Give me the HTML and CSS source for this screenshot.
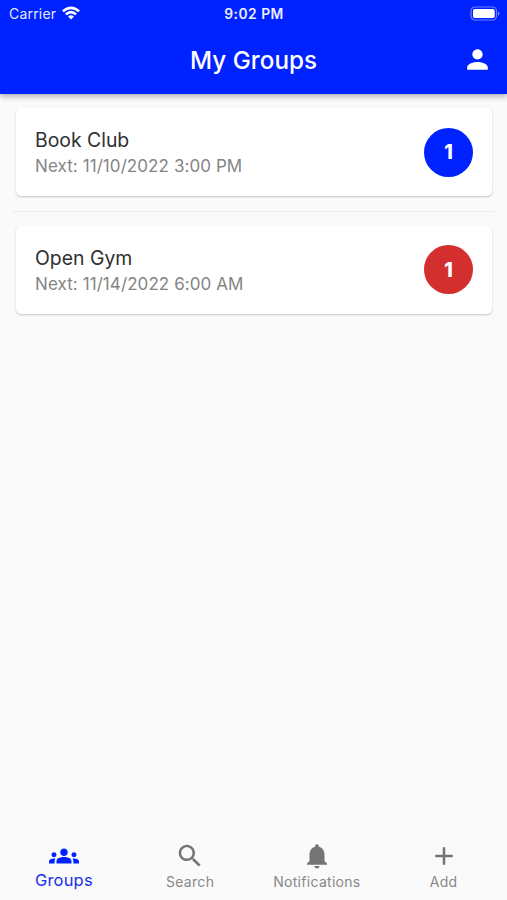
FILE: index.html
```html
<!DOCTYPE html>
<html lang="en">
<head>
<meta charset="utf-8">
<title>My Groups</title>
<link rel="stylesheet" href="styles.css">
</head>
<body>
<div class="app">
  <header class="header">
    <div class="status">
      <div class="carrier"><span>Carrier</span>
        <svg class="wifi" viewBox="0 0 18 14"><path d="M0 4.4Q9-3.6 18 4.4L16.2 6.2Q9 .2 1.8 6.2ZM3 7.5Q9 2.2 15 7.5L13.2 9.3Q9 5.7 4.8 9.3ZM6 10.5Q9 7.9 12 10.5L9 13.6Z"/></svg>
      </div>
      <span class="time">9:02 PM</span>
      <svg class="battery" viewBox="0 0 31 15"><rect class="shell" x="1" y="1" width="25.5" height="13" rx="4"/><rect x="3" y="3" width="21.7" height="9" rx="1.8"/><path class="cap" d="M28 5.2Q31 7.5 28 9.8Z"/></svg>
    </div>
    <div class="toolbar">
      <h1 class="title">My Groups</h1>
      <svg class="person" viewBox="0 0 24 24"><path d="M12 12c2.21 0 4-1.79 4-4s-1.79-4-4-4-4 1.79-4 4 1.79 4 4 4zm0 2c-2.67 0-8 1.34-8 4v2h16v-2c0-2.66-5.33-4-8-4z"/></svg>
    </div>
  </header>
  <main class="list">
    <article class="card">
      <div><h2 class="name">Book Club</h2><p class="next">Next: 11/10/2022 3:00 PM</p></div>
      <span class="badge">1</span>
    </article>
    <hr class="divider">
    <article class="card">
      <div><h2 class="name">Open Gym</h2><p class="next">Next: 11/14/2022 6:00 AM</p></div>
      <span class="badge red">1</span>
    </article>
  </main>
  <nav class="nav">
    <a class="tab active"><svg viewBox="0 0 24 24"><path d="M12 12.75c1.63 0 3.07.39 4.24.9 1.08.48 1.76 1.56 1.76 2.73V18H6v-1.61c0-1.18.68-2.26 1.76-2.73 1.17-.52 2.61-.91 4.24-.91zM4 13c1.1 0 2-.9 2-2s-.9-2-2-2-2 .9-2 2 .9 2 2 2zm1.13 1.1c-.37-.06-.74-.1-1.13-.1-.99 0-1.93.21-2.78.58C.48 14.9 0 15.62 0 16.43V18h4.5v-1.61c0-.83.23-1.61.63-2.29zM20 13c1.1 0 2-.9 2-2s-.9-2-2-2-2 .9-2 2 .9 2 2 2zm4 3.43c0-.81-.48-1.53-1.22-1.85-.85-.37-1.79-.58-2.78-.58-.39 0-.76.04-1.13.1.4.68.63 1.46.63 2.29V18H24v-1.57zM12 6c1.66 0 3 1.34 3 3s-1.34 3-3 3-3-1.34-3-3 1.34-3 3-3z"/></svg><span>Groups</span></a>
    <a class="tab"><svg viewBox="0 0 24 24"><path d="M15.5 14h-.79l-.28-.27C15.41 12.59 16 11.11 16 9.5 16 5.91 13.09 3 9.5 3S3 5.91 3 9.5 5.91 16 9.5 16c1.61 0 3.09-.59 4.23-1.57l.27.28v.79l5 4.99L20.49 19l-4.99-5zm-6 0C7.01 14 5 11.99 5 9.5S7.01 5 9.5 5 14 7.01 14 9.5 11.99 14 9.5 14z"/></svg><span>Search</span></a>
    <a class="tab"><svg viewBox="0 0 24 24"><path d="M12 22c1.1 0 2-.9 2-2h-4c0 1.1.89 2 2 2zm6-6v-5c0-3.07-1.64-5.64-4.5-6.32V4c0-.83-.67-1.5-1.5-1.5s-1.5.67-1.5 1.5v.68C7.63 5.36 6 7.92 6 11v5l-2 2v1h16v-1l-2-2z"/></svg><span>Notifications</span></a>
    <a class="tab"><svg viewBox="0 0 24 24"><path d="M19 13h-6v6h-2v-6H5v-2h6V5h2v6h6v2z"/></svg><span>Add</span></a>
  </nav>
</div>
</body>
</html>
```
FILE: styles.css
```css
* { box-sizing: border-box; }
body, h1, h2, p { margin: 0; }
body { font-family: Inter, "Liberation Sans", sans-serif; background: #fafafa; }
svg { display: block; fill: currentColor; }
.app { height: 900px; display: flex; flex-direction: column; }
.header { height: 94px; background: #0022ff; color: #fff; box-shadow: 0 2px 6px rgba(0,0,0,.34); flex: none; }
.status { height: 26px; display: grid; grid-template-columns: 1fr auto 1fr; align-items: center; padding: 0 6px 0 9px; font-size: 14px; }
.carrier { display: flex; align-items: center; gap: 6px; letter-spacing: .2px; color: #e4e8ff; }
.wifi { width: 18px; height: 14px; color: #fff; }
.time { padding: 2px 2px 0 0; font-size: 13.8px; font-weight: 600; letter-spacing: .5px; color: #edf0ff; }
.battery { width: 31px; height: 15px; justify-self: end; }
.shell { fill: none; stroke: #7080ff; stroke-width: 1.2; }
.cap { fill: #8090ff; }
.toolbar { height: 67px; display: grid; grid-template-columns: 1fr auto 1fr; align-items: center; padding: 0 14px; }
.title { grid-column: 2; padding-top: 2px; font-size: 24.2px; line-height: 30px; font-weight: 500; letter-spacing: .05px; }
.person { width: 31px; height: 31px; justify-self: end; }
.list { flex: 1; padding: 14px 12px; }
.card { height: 88px; margin: 0 3px 0 4px; padding: 0 19px; display: flex; align-items: center; justify-content: space-between; background: #fff; border-radius: 5px; box-shadow: 0 1px 2px rgba(0,0,0,.22); }
.name { padding-top: 3px; font-size: 19.4px; line-height: 25px; font-weight: 400; color: #303030; }
.next { font-size: 17px; line-height: 26px; color: #858585; letter-spacing: .08px; }
.badge { width: 49px; height: 49px; border-radius: 50%; background: #0022ff; color: #fff; display: grid; place-items: center; font-size: 19.5px; font-weight: 800; }
.red { background: #d32f2f; }
.divider { border: 0; height: 1px; background: #efefef; margin: 15px 0 14px; }
.card:last-child .badge { margin-bottom: 1px; }
.nav { height: 72px; display: grid; grid-template-columns: repeat(4, 1fr); border-top: 1px solid #f6f6f6; }
.tab { display: flex; flex-direction: column; align-items: center; padding-top: 12px; color: #888; font-size: 14px; line-height: 21px; letter-spacing: .3px; }
.tab svg { width: 30px; height: 30px; color: #747474; }
.active { padding: 12px 0 0 1px; color: #1730ed; font-size: 16.5px; line-height: 19px; letter-spacing: .2px; }
.active svg { color: #0022ff; }
```
